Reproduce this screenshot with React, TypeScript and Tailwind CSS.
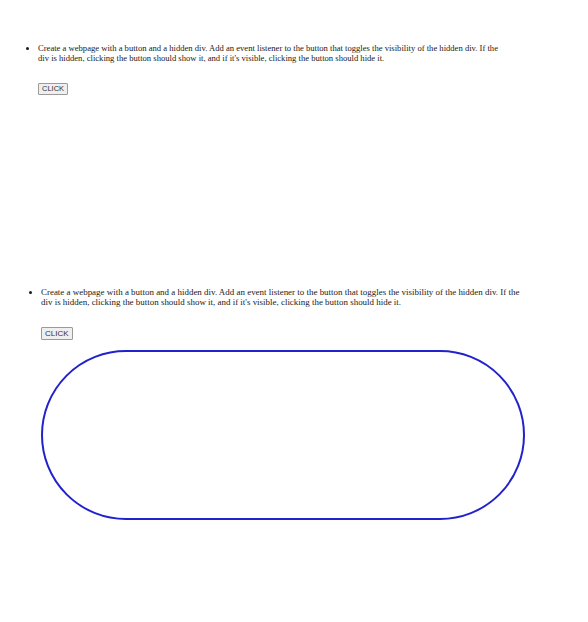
import React, { useState } from 'react';

const TASK =
  "Create a webpage with a button and a hidden div. Add an event listener to the button that toggles the visibility of the hidden div. If the div is hidden, clicking the button should show it, and if it's visible, clicking the button should hide it.";

const App = () => {
  const [showFirst, setShowFirst] = useState(false);
  const [showSecond, setShowSecond] = useState(true);

  return (
    <div className="w-[588px] h-[622px] bg-white overflow-hidden">
      {/* first capture: div hidden */}
      <section className="pt-[43px] h-[285px]">
        <ul className="pl-[38px] list-disc w-[502px] font-['Liberation_Serif',serif] text-[8.6px] leading-[10px] text-[#1a1a1a]">
          <li>{TASK}</li>
        </ul>
        <div className="flex pl-[38px] mt-[20px]">
          <button
            onClick={() => setShowFirst(!showFirst)}
            className="h-[12px] px-[3px] border border-[#9a9a9a] bg-[#efefef] rounded-[1px] font-['Liberation_Sans',sans-serif] font-normal text-[7.5px] leading-none text-[#333]"
          >
            CLICK
          </button>
        </div>
        {showFirst && (
          <div className="ml-[38px] mt-[10px] w-[460px] h-[160px] border-2 border-[#2222cc] rounded-full" />
        )}
      </section>

      {/* second capture: div visible */}
      <section className="pt-[2px]">
        <ul className="pl-[41px] list-disc w-[524px] font-['Liberation_Serif',serif] text-[8.95px] leading-[10px] text-[#1a1a1a]">
          <li>{TASK}</li>
        </ul>
        <div className="flex pl-[41px] mt-[20px]">
          <button
            onClick={() => setShowSecond(!showSecond)}
            className="h-[13px] px-[3px] border border-[#9a9a9a] bg-[#efefef] rounded-[1px] font-['Liberation_Sans',sans-serif] font-normal text-[8px] leading-none text-[#333]"
          >
            CLICK
          </button>
        </div>
        {showSecond && (
          <div className="ml-[41px] mt-[10px] w-[484px] h-[170px] border-2 border-[#2222cc] rounded-full" />
        )}
      </section>
    </div>
  );
};

export default App;
